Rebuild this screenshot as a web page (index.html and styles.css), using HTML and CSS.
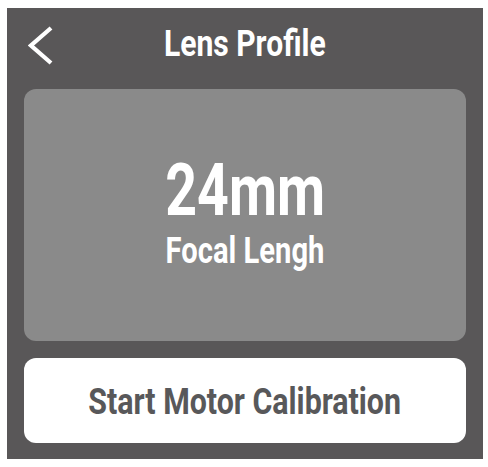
FILE: index.html
```html
<!DOCTYPE html>
<html>
<head>
<meta charset="utf-8">
<link rel="stylesheet" href="styles.css">
</head>
<body>
<div class="panel">
  <div class="header">
    <div class="back">
      <svg width="26" height="40" viewBox="0 0 26 40" aria-hidden="true">
        <path d="M23 2 L3 19.5 L23 37" fill="none" stroke="#ffffff" stroke-width="4.2" stroke-linecap="butt" stroke-linejoin="miter"/>
      </svg>
    </div>
    <div class="title"><span class="cond">Lens Profile</span></div>
    <div></div>
  </div>
  <div class="card">
    <div class="value"><span class="cond c-val">24mm</span></div>
    <div class="label"><span class="cond c-lab">Focal Lengh</span></div>
  </div>
  <div class="button"><span class="cond c-btn">Start Motor Calibration</span></div>
</div>
</body>
</html>
```

FILE: styles.css
```css
html, body {
  margin: 0;
  padding: 0;
  background: #ffffff;
}
body {
  font-family: Roboto, "Liberation Sans", sans-serif;
  font-weight: 700;
  padding: 8px 0 0 7px;
}
.panel {
  width: 476px;
  height: 451px;
  background: #595758;
  box-sizing: border-box;
  padding: 0 17px 16px 17px;
  display: flex;
  flex-direction: column;
}
.header {
  height: 81px;
  display: grid;
  grid-template-columns: 1fr auto 1fr;
  align-items: center;
}
.back {
  display: flex;
  align-items: center;
  padding-left: 4px;
  margin-top: -6px;
}
.back svg { display: block; }
.title {
  color: #ffffff;
  font-size: 36px;
  line-height: 36px;
  margin-top: -10px;
  text-align: center;
}
.cond {
  display: inline-block;
  white-space: nowrap;
  transform: scaleX(0.835);
  transform-origin: center;
}
.card {
  height: 252px;
  background: #8a8a8a;
  border-radius: 12px;
  display: flex;
  flex-direction: column;
  align-items: center;
  justify-content: center;
  color: #ffffff;
}
.value {
  font-size: 73px;
  line-height: 60px;
  height: 60px;
}
.c-val { transform: scaleX(0.76); }
.label {
  font-size: 36px;
  line-height: 40px;
  height: 40px;
  margin-top: 11px;
}
.c-lab { transform: scaleX(0.81); }
.button {
  margin-top: 17px;
  height: 85px;
  background: #ffffff;
  border-radius: 12px;
  display: flex;
  align-items: center;
  justify-content: center;
  color: #58585a;
  font-size: 37px;
  padding-top: 2px;
  box-sizing: border-box;
}
.c-btn { transform: scaleX(0.82); }
```
